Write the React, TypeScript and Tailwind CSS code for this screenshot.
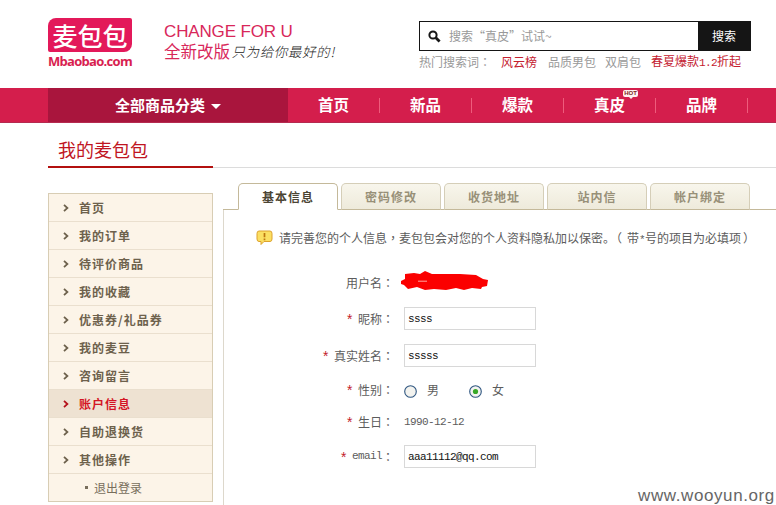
import React from 'react';

const hotWords = [
  { label: '风云榜', className: 'ml-[10px] text-[#c4202f]' },
  { label: '品质男包', className: 'ml-[11px]' },
  { label: '双肩包', className: 'ml-[9px]' },
];

const navItems = [
  { label: '首页' },
  { label: '新品' },
  { label: '爆款' },
  { label: '真皮', hot: true },
  { label: '品牌' },
];

const menuItems = [
  { label: '首页' },
  { label: '我的订单' },
  { label: '待评价商品' },
  { label: '我的收藏' },
  { label: '优惠券/礼品券' },
  { label: '我的麦豆' },
  { label: '咨询留言' },
  { label: '账户信息', active: true },
  { label: '自助退换货' },
  { label: '其他操作' },
];

const tabs = ['基本信息', '密码修改', '收货地址', '站内信', '帐户绑定'];

function Colon() {
  return <span className="font-['Noto_Sans_CJK_TC',sans-serif]" lang="zh-TW">：</span>;
}

function Header() {
  return (
    <header className="flex h-[88px] items-start pl-12">
      {/* Logo */}
      <div className="mt-[18px] w-[85px]">
        <div className="flex h-[34px] w-[84px] items-center justify-center rounded-tl-lg rounded-br-lg rounded-tr-[2px] rounded-bl-[2px] bg-[#e3195a] text-[25px] leading-[34px] font-medium text-white">
          麦包包
        </div>
        <div className="mt-[2px] font-['Open_Sans',sans-serif] text-[13px] leading-[14px] font-bold whitespace-nowrap tracking-[-0.7px] text-[#d81e50]">
          Mbaobao.com
        </div>
      </div>

      {/* Slogan */}
      <div className="mt-[22px] ml-[31px] w-[180px] whitespace-nowrap text-[#d8275a]">
        <div className="font-['Liberation_Sans',sans-serif] text-[17px] leading-[20px] tracking-[-0.15px]">CHANGE FOR U</div>
        <div className="flex h-[17px] items-center">
          <span className="text-[16.5px] leading-[16px]">全新改版</span>
          <span className="ml-[3px] -skew-x-12 font-light text-[13.5px] leading-[16px] tracking-[0.6px] text-[#222]">
            只为给你最好的!
          </span>
        </div>
      </div>

      {/* Search */}
      <div className="mt-[21px] ml-[75px] w-[332px]">
        <div className="flex h-[30px] border border-[#151515]">
          <div className="flex flex-1 items-center pl-2">
            <svg width="13" height="13" viewBox="0 0 13 13" fill="none" stroke="#161616">
              <circle cx="5" cy="5" r="3.6" strokeWidth="2" />
              <path d="M7.8 7.8 L11.6 11.6" strokeWidth="2.8" />
            </svg>
            <span className="ml-2 text-[12px] text-[#999]">搜索“真皮”试试~</span>
          </div>
          <button className="w-[52px] bg-[#151515] text-[12px] text-white">搜索</button>
        </div>
        <div className="flex h-[21px] items-center text-[12px] whitespace-nowrap text-[#999]">
          <span>热门搜索词<Colon /></span>
          {hotWords.map((word) => (
            <a key={word.label} className={word.className}>{word.label}</a>
          ))}
          <a className="ml-[10px] text-[#c4202f]">
            春夏爆款<span className="font-['Liberation_Mono',monospace] text-[11px] tracking-[-0.6px]">1.2</span>折起
          </a>
        </div>
      </div>
    </header>
  );
}

function NavBar() {
  return (
    <nav className="flex h-[35px] border-b border-[#b52b50] bg-[#d41e4c] pl-12 font-bold text-white">
      <div className="flex w-[240px] items-center justify-center bg-[#a9153d] text-[15px]">
        全部商品分类
        <svg className="mt-[2px] ml-[6px]" width="10" height="5" viewBox="0 0 10 5">
          <path d="M0 0 H10 L5 5 Z" fill="#fff" />
        </svg>
      </div>
      {navItems.map((item) => (
        <div key={item.label} className="flex w-[92px] items-center">
          <span className="relative flex-1 text-center text-[15.5px]">
            {item.label}
            {item.hot && (
              <span className="absolute -top-[3px] left-[59px] flex h-[7px] w-[15px] items-center justify-center rounded-[2px] bg-[#fff2f0] font-['Liberation_Sans',sans-serif] text-[6px] leading-[7px] text-[#7c1f22]">
                HOT
                <svg className="absolute top-[7px] left-[6px]" width="4" height="2" viewBox="0 0 4 2">
                  <path d="M0 0 H4 L2 2 Z" fill="#fff2f0" />
                </svg>
              </span>
            )}
          </span>
          <span className="h-[15px] w-px bg-[#ee5c7c]" />
        </div>
      ))}
    </nav>
  );
}

function Sidebar() {
  return (
    <aside className="mt-[25px] h-[309px] w-[165px] border border-[#d8cdb4] bg-[#fcf4e8] text-[12px] text-[#6d614c]">
      {menuItems.map((item) => (
        <div
          key={item.label}
          className={`flex h-[28px] items-center border-b border-[#eadfce] pl-[14px] font-bold tracking-[1px] ${
            item.active ? 'bg-[#eee2d2] text-[#d41524]' : ''
          }`}
        >
          <svg width="6" height="8" viewBox="0 0 6 8" fill="none" stroke={item.active ? '#b5121c' : '#6d614c'} strokeWidth="1.8">
            <path d="M1 0.8 L4.4 4 L1 7.2" />
          </svg>
          <span className="ml-[10px]">{item.label}</span>
        </div>
      ))}
      <div className="flex h-[27px] items-center pl-[36px] text-[#786e5c]">
        <span className="mr-[6px] size-[3px] bg-[#786e5c]" />
        退出登录
      </div>
    </aside>
  );
}

function Tabs() {
  return (
    <div className="flex h-[27px] items-stretch">
      <div className="w-[15px] border-b border-[#c4b99a]" />
      {tabs.map((tab, i) => (
        <React.Fragment key={tab}>
          <div
            className={`flex w-[100px] items-center justify-center rounded-t-[5px] border text-[12px] font-bold tracking-[1px] ${
              i === 0
                ? 'border-[#c4b99a] border-b-transparent text-[#4c4534]'
                : 'border-[#d5ceb8] border-b-[#c4b99a] bg-linear-to-b from-[#f8f6ec] to-[#eeeadb] text-[#989078]'
            }`}
          >
            {tab}
          </div>
          {i < tabs.length - 1 && <div className="w-[3px] border-b border-[#c4b99a]" />}
        </React.Fragment>
      ))}
      <div className="flex-1 border-b border-[#c4b99a]" />
    </div>
  );
}

function Label({ text, required = true, latin = false }: { text: string; required?: boolean; latin?: boolean }) {
  return (
    <label className="flex w-[170px] items-center justify-end">
      {required && (
        <span className="mt-[4px] mr-[4px] font-['Liberation_Mono',monospace] text-[14px] leading-[12px] text-[#c3202c]">*</span>
      )}
      <span className={latin ? "font-['Liberation_Mono',monospace] text-[11px] tracking-[-0.6px]" : ''}>{text}</span>
      <Colon />
    </label>
  );
}

function TextInput({ value }: { value: string }) {
  return (
    <input
      className="ml-[10px] h-[23px] w-[132px] border border-[#d8d8d8] bg-white px-[3px] pt-px font-['Liberation_Mono',monospace] text-[11px] tracking-[-0.6px] text-[#111]"
      defaultValue={value}
    />
  );
}

function Radio({ checked = false }: { checked?: boolean }) {
  return (
    <svg className="mt-[3px]" width="13" height="13" viewBox="0 0 13 13">
      <circle cx="6.5" cy="6.5" r="5.8" fill="#f3f3ef" stroke="#2f5680" strokeWidth="1.1" />
      {checked && <circle cx="6.5" cy="6.5" r="2.6" fill="#38a826" />}
    </svg>
  );
}

function ProfileForm() {
  return (
    <div className="text-[12px] text-[#5c5c5c]">
      <div className="flex h-[56px] items-center pl-[32px] whitespace-nowrap [text-spacing-trim:space-all]">
        <svg width="17" height="16" viewBox="0 0 17 16">
          <path
            d="M3 1 H14 Q16 1 16 3.5 V9 Q16 11.5 14 11.5 H8 L5 14.5 V11.5 H3 Q1 11.5 1 9 V3.5 Q1 1 3 1 Z"
            fill="#fbdf62"
            stroke="#dda22c"
          />
          <path d="M8.5 3 V7.3 M8.5 8.5 V10.2" stroke="#bd7610" strokeWidth="1.7" />
        </svg>
        <span className="mt-[2px] ml-[6px]">
          请完善您的个人信息
          <span className="font-['Noto_Sans_CJK_TC',sans-serif]" lang="zh-TW">，</span>
          麦包包会对您的个人资料隐私加以保密。
          <span className="mr-[5px] -ml-[5px]">（</span>
          带
          <span className="font-['Liberation_Mono',monospace] text-[11px] tracking-[-0.6px]">*</span>
          号的项目为必填项
          <span className="ml-[2px]">）</span>
        </span>
      </div>

      <div className="flex h-[34px] items-center">
        <Label text="用户名" required={false} />
        <svg className="-mt-[5px] ml-[6px]" width="90" height="20" viewBox="0 0 90 20">
          <path
            d="M1 10 L5 8 V3 L14 2 L20 3 L25 0 L32 3 L60 3 L76 4 L83 8 L88 9 L87 15 L82 16 L81 18 L72 17 L64 19 L56 17 L46 19 L34 18 L25 19 L17 16 L8 18 L4 14 L1 13 Z"
            fill="#fb0000"
          />
          <path d="M18 10.2 H27" stroke="#ffb8b0" strokeWidth="0.9" />
        </svg>
      </div>
      <div className="flex h-[37px] items-center">
        <Label text="昵称" />
        <TextInput value="ssss" />
      </div>
      <div className="flex h-[37px] items-center">
        <Label text="真实姓名" />
        <TextInput value="sssss" />
      </div>
      <div className="flex h-[32px] items-center">
        <Label text="性别" />
        <span className="ml-[10px] flex items-center">
          <Radio />
          <span className="ml-[10px]">男</span>
        </span>
        <span className="ml-[30px] flex items-center">
          <Radio checked />
          <span className="ml-[10px]">女</span>
        </span>
      </div>
      <div className="flex h-[32px] items-center">
        <Label text="生日" />
        <span className="mt-px ml-[10px] font-['Liberation_Mono',monospace] text-[11px] tracking-[-0.6px]">1990-12-12</span>
      </div>
      <div className="flex h-[37px] items-center">
        <Label text="email" latin />
        <TextInput value="aaa11112@qq.com" />
      </div>
    </div>
  );
}

export default function App() {
  return (
    <div className="relative h-[505px] w-[776px] overflow-hidden bg-white font-['Noto_Sans_CJK_SC',sans-serif]" lang="zh-CN">
      <Header />
      <NavBar />

      {/* Page title */}
      <div className="flex h-[45px] items-end pl-12">
        <h1 className="h-[36px] w-[165px] border-b-2 border-[#b3100f] pl-[10px] text-[18px] leading-[34px] text-[#c01522]">
          我的麦包包
        </h1>
        <div className="h-px flex-1 bg-[#dcdcdc]" />
      </div>

      <div className="flex pl-12">
        <Sidebar />
        <main className="mt-[15px] ml-[10px] flex-1">
          <Tabs />
          <div className="h-[300px] border-l border-[#ddd8cc]">
            <ProfileForm />
          </div>
        </main>
      </div>

      <div className="absolute top-[486px] left-[638px] font-['Liberation_Sans',sans-serif] text-[17px] leading-[19px] tracking-[0.6px] whitespace-nowrap text-[#666]">
        www.wooyun.org
      </div>
    </div>
  );
}
